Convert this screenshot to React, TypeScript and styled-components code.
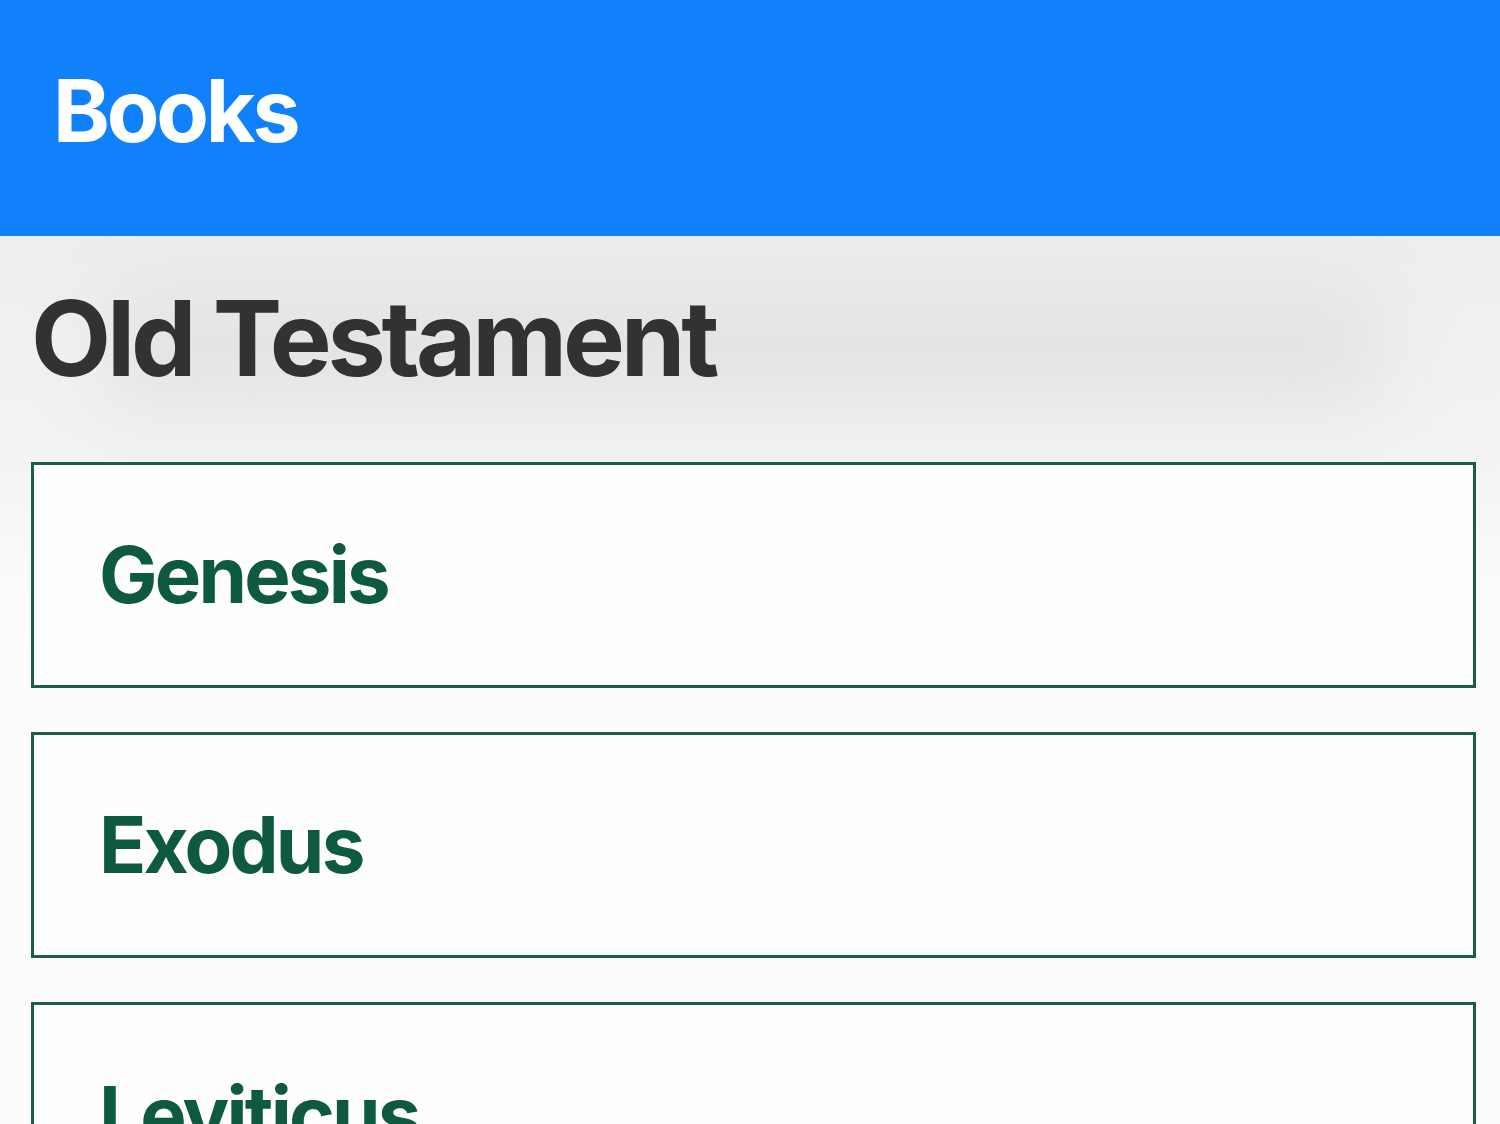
import React from "react";
import styled, { createGlobalStyle } from "styled-components";

const Global = createGlobalStyle`
  html, body { margin: 0; padding: 0; background: #fdfcfd; }
  body { font-family: Inter, "Noto Sans", sans-serif; overflow: hidden; }
`;

const Page = styled.div`
  width: 1500px;
  height: 1124px;
  overflow: hidden;
  display: flex;
  flex-direction: column;
  background: #fdfcfd;
`;

const Header = styled.header`
  position: relative;
  z-index: 2;
  height: 236px;
  background: #1180fb;
  display: flex;
  align-items: center;
  padding-left: 53px;
  box-sizing: border-box;
  flex-shrink: 0;
`;

const Title = styled.h1`
  margin: 0;
  color: #ffffff;
  font-size: 86px;
  font-weight: 700;
  letter-spacing: -3.2px;
  line-height: 1;
  transform: translateY(-7px);
`;

const Content = styled.main`
  position: relative;
  z-index: 1;
  display: flex;
  flex-direction: column;
  padding: 0 24px 0 31px;
  background: linear-gradient(180deg, #eeedef 0px, #f3f2f4 220px, #fbfafb 330px, #fdfcfd 420px);
  flex: 1;
`;

const SectionHead = styled.div`
  height: 226px;
  display: flex;
  align-items: center;
  position: relative;
  &::before {
    content: "";
    position: absolute;
    left: 80px;
    right: 100px;
    top: 50px;
    bottom: 60px;
    background: #e3e2e4;
    filter: blur(40px);
    z-index: 0;
  }
`;

const SectionTitle = styled.h2`
  position: relative;
  z-index: 1;
  margin: 0;
  color: #333134;
  font-size: 104px;
  font-weight: 700;
  letter-spacing: -4.2px;
  line-height: 1;
  transform: translateY(-11px);
`;

const List = styled.div`
  display: flex;
  flex-direction: column;
  gap: 44px;
  position: relative;
  z-index: 1;
`;

const Card = styled.div`
  height: 226px;
  box-sizing: border-box;
  border: 3px solid #1a5e48;
  background: #fffeff;
  display: flex;
  align-items: center;
  padding-left: 65px;
  flex-shrink: 0;
`;

const CardTitle = styled.span`
  color: #0e5a3e;
  font-size: 78px;
  font-weight: 700;
  letter-spacing: -2.8px;
  line-height: 1;
`;

const books = ["Genesis", "Exodus", "Leviticus"];

export default function App() {
  return (
    <Page>
      <Global />
      <Header>
        <Title>Books</Title>
      </Header>
      <Content>
        <SectionHead>
          <SectionTitle>Old Testament</SectionTitle>
        </SectionHead>
        <List>
          {books.map((b) => (
            <Card key={b}>
              <CardTitle>{b}</CardTitle>
            </Card>
          ))}
        </List>
      </Content>
    </Page>
  );
}
